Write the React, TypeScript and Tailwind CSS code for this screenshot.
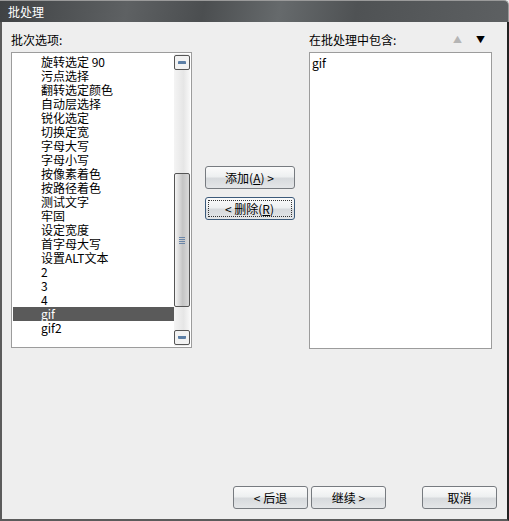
import React from 'react';

const font = { fontFamily: '"Noto Sans CJK SC", "Liberation Sans", sans-serif' };

const options = [
  '旋转选定 90',
  '污点选择',
  '翻转选定颜色',
  '自动层选择',
  '锐化选定',
  '切换定宽',
  '字母大写',
  '字母小写',
  '按像素着色',
  '按路径着色',
  '测试文字',
  '牢固',
  '设定宽度',
  '首字母大写',
  '设置ALT文本',
  '2',
  '3',
  '4',
  'gif',
  'gif2',
];

function Btn({ children, focused, className = '' }: { children: React.ReactNode; focused?: boolean; className?: string }) {
  return (
    <button
      className={`h-[23px] rounded-[3px] border text-[12px] leading-none text-black bg-[linear-gradient(to_bottom,#fbfbfb_0%,#eef0f1_45%,#d7dadd_55%,#e4e6e8_100%)] ${
        focused ? 'border-[#3c5a7a] p-[2px]' : 'border-[#777b80]'
      } ${className}`}
    >
      {focused ? (
        <span className="flex h-full w-full items-center justify-center border border-dotted border-[#333]">{children}</span>
      ) : (
        children
      )}
    </button>
  );
}

function ScrollBar() {
  return (
    <div className="flex w-[16px] flex-col bg-[linear-gradient(to_right,#f4f4f4,#e6e6e6_60%,#f8f8f8)] py-[1px]">
      <div className="flex h-[15px] items-center justify-center rounded-[2px] border border-[#555] bg-[#f2f2f2]">
        <div className="h-[3px] w-[8px] rounded-t-[1px] bg-[#5c7fa6]" />
      </div>
      <div className="h-[103px]" />
      <div className="flex h-[134px] items-center justify-center rounded-[2px] border border-[#555] bg-[linear-gradient(to_right,#f4f4f4,#c4c4c4_55%,#dadada)]">
        <div className="flex flex-col gap-[1px]">
          <div className="h-[1px] w-[6px] bg-[#6b86a8]" />
          <div className="h-[1px] w-[6px] bg-[#6b86a8]" />
          <div className="h-[1px] w-[6px] bg-[#6b86a8]" />
          <div className="h-[1px] w-[6px] bg-[#6b86a8]" />
        </div>
      </div>
      <div className="flex-1" />
      <div className="flex h-[15px] items-center justify-center rounded-[2px] border border-[#555] bg-[#f2f2f2]">
        <div className="h-[3px] w-[8px] rounded-b-[1px] bg-[#5c7fa6]" />
      </div>
    </div>
  );
}

export default function App() {
  return (
    <div style={font} className="flex h-[521px] w-[509px] flex-col overflow-hidden bg-[#eeeeee] text-[12px] text-black">
      {/* Title bar */}
      <div className="flex h-[22px] items-center rounded-tr-[5px] border-t border-r border-[#9a9a9a] bg-[linear-gradient(100deg,#3f4244_0%,#5e6163_25%,#4b4e50_40%,#666a6c_55%,#4f5254_70%,#5d6062_100%)] pl-[8px] text-[12px] text-white">
        批处理
      </div>

      <div className="flex flex-1 flex-col border-b-2 border-l-2 border-r-2 border-[#5b5b5b] border-r-[#222]">
        <div className="flex pl-[9px] pt-[11px]">
          {/* Left column */}
          <div className="flex w-[181px] flex-col">
            <div className="h-[14px] leading-[14px]">批次选项:</div>
            <div className="mt-[5px] flex h-[296px] border border-[#9c9c9c] bg-white p-[1px]">
              <div className="flex-1 pt-[1px]">
                {options.map(o => (
                  <div
                    key={o}
                    className={`h-[14px] pl-[28px] leading-[14px] ${o === 'gif' ? 'bg-[#5a5a5a] text-white' : ''}`}
                  >
                    {o}
                  </div>
                ))}
              </div>
              <ScrollBar />
            </div>
          </div>

          {/* Middle buttons */}
          <div className="flex w-[117px] flex-col items-center pt-[133px] pr-[2px]">
            <Btn className="w-[90px]">添加(<u>A</u>) &gt;</Btn>
            <Btn focused className="mt-[8px] w-[90px]">&lt; 删除(<u>R</u>)</Btn>
          </div>

          {/* Right column */}
          <div className="flex w-[183px] flex-col">
            <div className="flex h-[14px] items-center leading-[14px]">
              <span>在批处理中包含:</span>
              <span className="ml-auto mr-[14px] text-[9px] text-[#b5b5b5]">▲</span>
              <span className="mr-[7px] text-[9px] text-black">▼</span>
            </div>
            <div className="mt-[5px] h-[297px] border border-[#9c9c9c] bg-white pl-[2px] pt-[3px] leading-[14px]">
              gif
            </div>
          </div>
        </div>

        <div className="mt-auto flex pb-[10px] pl-[231px]">
          <Btn className="w-[75px]">&lt; 后退</Btn>
          <Btn className="ml-[3px] w-[75px]">继续 &gt;</Btn>
          <Btn className="ml-[36px] w-[75px]">取消</Btn>
        </div>
      </div>
    </div>
  );
}
